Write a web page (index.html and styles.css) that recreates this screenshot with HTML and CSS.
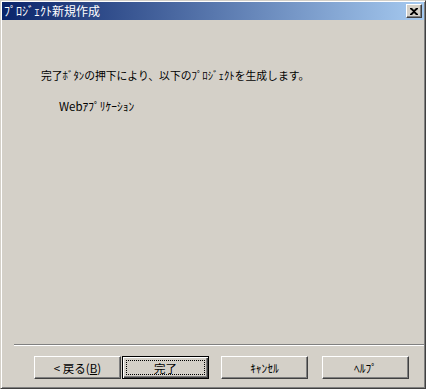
FILE: index.html
```html
<!DOCTYPE html>
<html>
<head>
    <title>プロジェクト新規作成</title>
    <link rel="stylesheet" href="styles.css">
</head>
<body>
    <div class="window">
        <div class="titlebar">
            <span class="title">ﾌﾟﾛｼﾞｪｸﾄ新規作成</span>
            <button class="close" type="button">
                <svg width="8" height="7" viewBox="0 0 8 7"><path d="M0 0h2l2 2 2-2h2v1L5 3.5 8 6v1H6L4 5 2 7H0V6l3-2.5L0 1z" fill="#000"/></svg>
            </button>
        </div>

        <div class="content">
            <p class="message">完了ﾎﾞﾀﾝの押下により、以下のﾌﾟﾛｼﾞｪｸﾄを生成します。</p>
            <p class="item">Webｱﾌﾟﾘｹｰｼｮﾝ</p>
        </div>

        <div class="separator"></div>

        <div class="buttons">
            <button class="btn" type="button">&lt; 戻る(<u>B</u>)</button>
            <button class="btn default" type="button"><span class="focus">完了</span></button>
            <button class="btn spaced" type="button">ｷｬﾝｾﾙ</button>
            <button class="btn spaced" type="button">ﾍﾙﾌﾟ</button>
        </div>
    </div>
</body>
</html>
```

FILE: styles.css
```css
body {
    margin: 0;
    padding: 0;
    background-color: #D4D0C8;
    font-family: "Noto Sans CJK JP", "DejaVu Sans", sans-serif;
}

.window {
    box-sizing: border-box;
    width: 426px;
    height: 389px;
    display: flex;
    flex-direction: column;
    padding: 1px;
    background-color: #D4D0C8;
    border: 1px solid;
    border-color: #D4D0C8 #404040 #404040 #D4D0C8;
    box-shadow: inset 1px 1px #fff, inset -1px -1px #808080;
}

.titlebar {
    height: 18px;
    display: flex;
    align-items: center;
    justify-content: space-between;
    padding: 0 2px 0 2px;
    background: linear-gradient(to right, #0A246A, #A6CAF0);
}

.title {
    color: #fff;
    font-size: 12px;
    line-height: 18px;
    white-space: nowrap;
}

.close {
    box-sizing: border-box;
    width: 16px;
    height: 14px;
    padding: 0;
    display: flex;
    align-items: center;
    justify-content: center;
    background-color: #D4D0C8;
    border: 1px solid;
    border-color: #fff #404040 #404040 #fff;
    box-shadow: inset -1px -1px #808080;
}

.content {
    flex: 1;
    padding: 48px 0 0 39px;
    font-size: 10.8px;
    color: #000;
}

.content p {
    margin: 0;
    line-height: 14px;
    white-space: nowrap;
}

.item {
    margin-top: 17px !important;
    padding-left: 18px;
    font-size: 11.5px;
}

.separator {
    height: 0;
    margin-left: 12px;
    border-top: 1px solid #808080;
    border-bottom: 1px solid #fff;
}

.buttons {
    display: flex;
    padding: 10px 0 8px 32px;
}

.btn {
    box-sizing: border-box;
    width: 87px;
    height: 23px;
    padding: 0;
    font-family: "Noto Sans CJK JP", "DejaVu Sans", sans-serif;
    font-size: 11.5px;
    color: #000;
    background-color: #D4D0C8;
    border: 1px solid;
    border-color: #fff #404040 #404040 #fff;
    box-shadow: inset -1px -1px #808080;
}

.btn.default {
    margin-left: 1px;
    border: 1px solid #000;
    box-shadow: inset 1px 1px #fff, inset -1px -1px #404040, inset -2px -2px #808080;
    padding: 3px;
}

.focus {
    display: flex;
    align-items: center;
    justify-content: center;
    height: 100%;
    box-sizing: border-box;
    border: 1px dotted #000;
}

.btn.spaced {
    margin-left: 12px;
}

.btn.spaced + .btn.spaced {
    margin-left: 14px;
}
```
